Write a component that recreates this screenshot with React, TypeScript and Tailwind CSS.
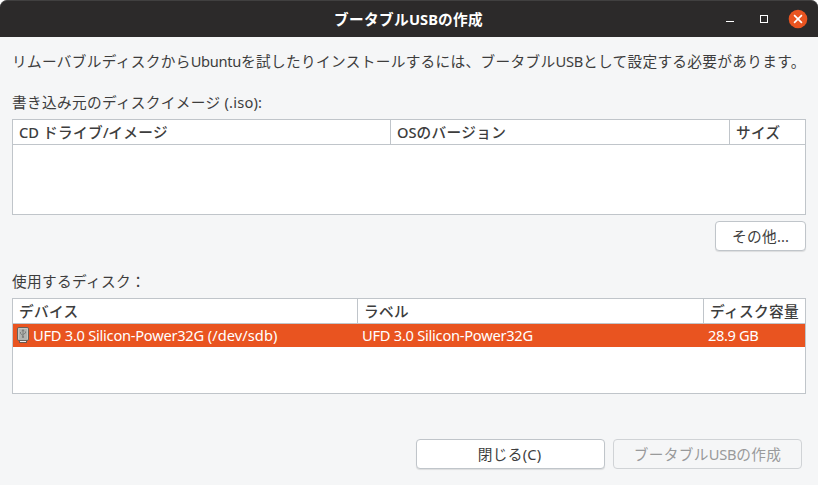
import type { ReactNode } from "react";

function Latin({ children, className = "tracking-[-0.3px]" }: { children: ReactNode; className?: string }) {
  return <span className={className}>{children}</span>;
}

function TitleBar() {
  return (
    <header className="grid h-[37px] shrink-0 grid-cols-[1fr_auto_1fr] items-center rounded-t-[7px] border-t border-[#414040] bg-[#2c2a2a] text-white">
      <span />
      <h1 className="pr-px text-[14.667px] leading-[22px] font-bold tracking-[0.33px]">
        ブータブル<Latin className="tracking-[0px]">USB</Latin>の作成
      </h1>
      <div className="flex items-center justify-end pr-[10px]">
        <svg width="10" height="10" className="mr-6" shapeRendering="crispEdges" aria-label="最小化">
          <rect x="2" y="7" width="8" height="1" fill="currentColor" />
        </svg>
        <svg width="10" height="10" className="mr-5" shapeRendering="crispEdges" aria-label="最大化">
          <rect x="2.5" y="1.5" width="7" height="7" fill="none" stroke="currentColor" />
        </svg>
        <svg width="20" height="20" aria-label="閉じる">
          <circle cx="10" cy="10" r="9.3" fill="#e95420" />
          <path d="M6.1 6.1l7.8 7.8M13.9 6.1l-7.8 7.8" stroke="white" strokeWidth="1.6" />
        </svg>
      </div>
    </header>
  );
}

function UsbIcon() {
  return (
    <svg width="14" height="18" viewBox="0 0 14 18" className="shrink-0">
      <rect x="3.5" y="13.5" width="7" height="3" fill="#eeeeec" stroke="#6f5a50" />
      <rect x="1.5" y="1.5" width="11" height="13" rx="1.5" fill="#b2b4b0" stroke="#66605b" />
      <path d="M2.5 13.5V2.5h9v11" fill="none" stroke="#cfd0cd" strokeOpacity="0.7" />
      <path d="M7 4v7M4.5 6v1.5L7 9.5M9.5 5.5V7L7 8.5" fill="none" stroke="#7c7e7b" />
      <path d="M5.3 5.2L7 3l1.7 2.2z" fill="#7c7e7b" />
      <circle cx="7" cy="11" r="1.1" fill="#7c7e7b" />
    </svg>
  );
}

function HeaderCell({ children, className = "" }: { children: ReactNode; className?: string }) {
  return <div className={`h-full border-[#c0c5ca] pl-[6px] leading-[24px] whitespace-nowrap ${className}`}>{children}</div>;
}

export default function App() {
  return (
    <div className="h-[485px] w-[818px] bg-white font-['Noto_Sans','Noto_Sans_CJK_JP',sans-serif] text-[14.667px] leading-[22px] tracking-[0.33px] text-[#3d3d3d]">
      <div className="flex h-full flex-col rounded-t-[7px] bg-[#f5f6f7]">
        <TitleBar />
        <main className="flex flex-col px-3 pt-[13px]">
          <p className="whitespace-nowrap">
            リムーバブルディスクから<Latin>Ubuntu</Latin>を試したりインストールするには、ブータブル<Latin>USB</Latin>として設定する必要があります。
          </p>
          <p className="mt-[19px]">
            書き込み元のディスクイメージ<Latin className="tracking-[0.2px]"> (.iso):</Latin>
          </p>
          <section className="mt-[6px] h-24 w-[794px] border border-[#c0c5ca] bg-white">
            <div className="grid h-[25px] grid-cols-[377px_339px_1fr] border-b border-[#c0c5ca] font-medium">
              <HeaderCell><Latin className="tracking-[0.05px]">CD </Latin>ドライブ<Latin>/</Latin>イメージ</HeaderCell>
              <HeaderCell className="border-l"><Latin className="tracking-[0px]">OS</Latin>のバージョン</HeaderCell>
              <HeaderCell className="border-l">サイズ</HeaderCell>
            </div>
          </section>
          <button className="mt-[6px] h-[30px] w-[91px] self-end rounded-[4px] border border-[#c0c5ca] bg-white shadow-[0_1px_1px_rgba(0,0,0,0.1)]">
            その他<Latin className="tracking-[0px]">...</Latin>
          </button>
          <p className="mt-[19px]">使用するディスク：</p>
          <section className="mt-[6px] h-24 w-[794px] border border-[#c0c5ca] bg-white">
            <div className="grid h-[25px] grid-cols-[344px_346px_1fr] border-b border-[#c0c5ca] font-medium">
              <HeaderCell>デバイス</HeaderCell>
              <HeaderCell className="border-l">ラベル</HeaderCell>
              <HeaderCell className="border-l">ディスク容量</HeaderCell>
            </div>
            <div className="grid h-[23px] grid-cols-[349px_346px_1fr] items-start bg-[#e95420] leading-[23px] tracking-[-0.26px] whitespace-nowrap text-white">
              <div className="flex items-start gap-[3px] pl-[3px]">
                <span className="pt-[2px]"><UsbIcon /></span>
                <span>UFD 3.0 Silicon-Power32G<Latin className="tracking-[0.05px]"> (/dev/sdb)</Latin></span>
              </div>
              <div>UFD 3.0 Silicon-Power32G</div>
              <div className="tracking-[-0.4px]">28.9 GB</div>
            </div>
          </section>
          <div className="mt-[45px] flex justify-end gap-2 pr-1">
            <button className="h-[30px] w-[189px] rounded-[4px] border border-[#c0c5ca] bg-white pr-[2px] shadow-[0_1px_1px_rgba(0,0,0,0.1)]">
              閉じる<Latin className="tracking-[0.1px]">(C)</Latin>
            </button>
            <button disabled className="h-[30px] w-[189px] rounded-[4px] border border-[#d0d3d6] text-[#999a9b]">
              ブータブル<Latin>USB</Latin>の作成
            </button>
          </div>
        </main>
      </div>
    </div>
  );
}
